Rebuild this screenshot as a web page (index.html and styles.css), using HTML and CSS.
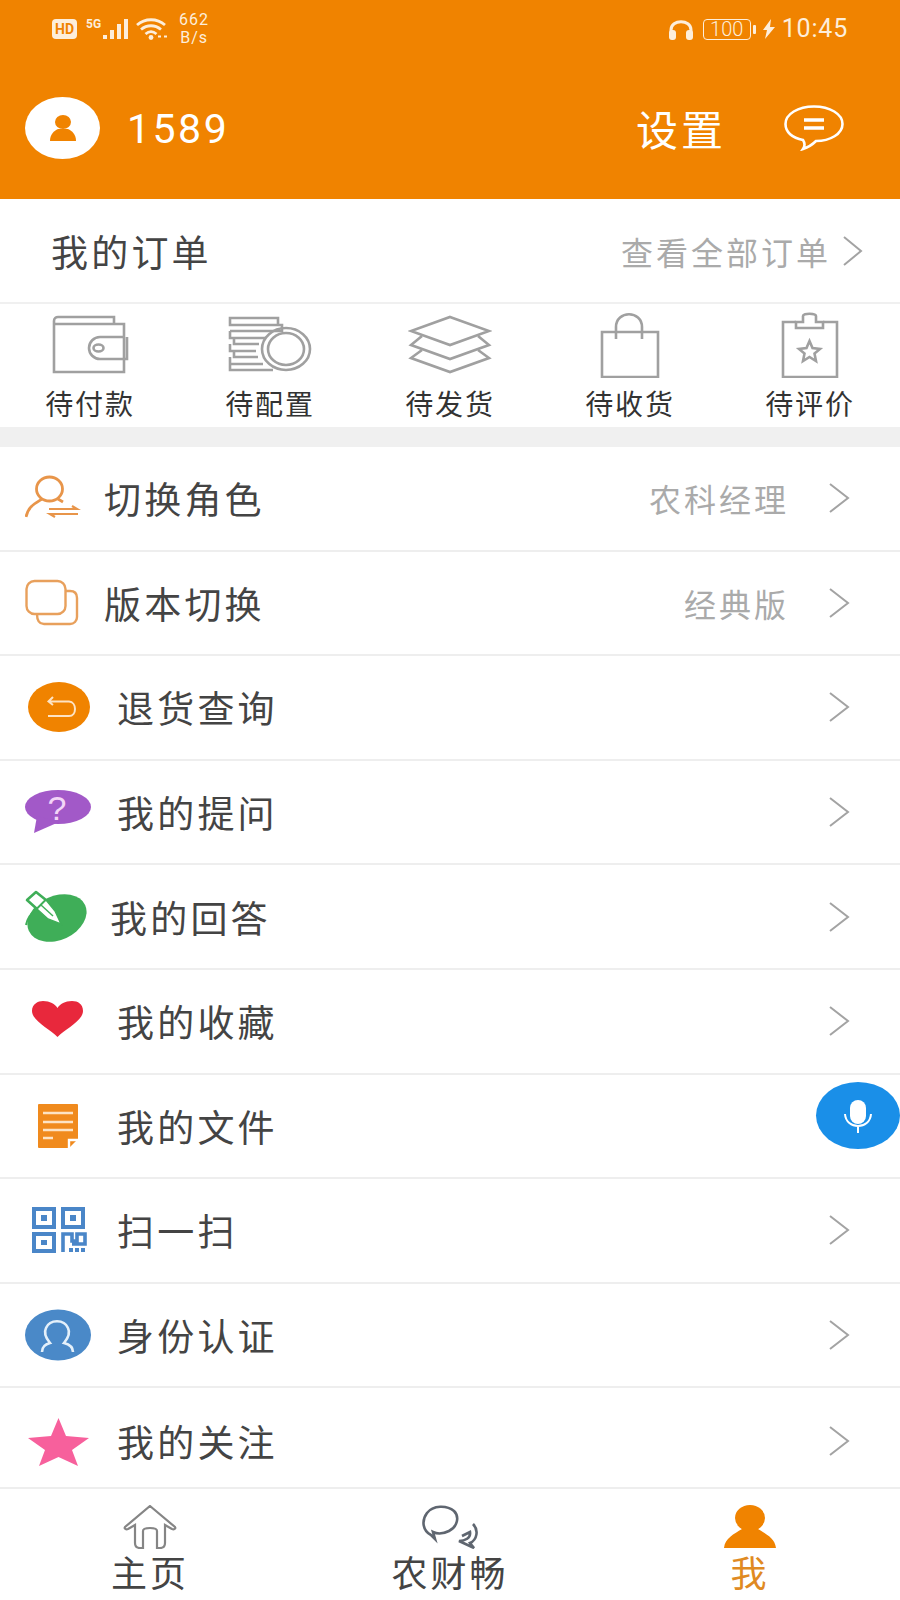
FILE: index.html
```html
<!DOCTYPE html>
<html lang="zh-CN">
<head>
<meta charset="utf-8">
<title>我的</title>
<link rel="stylesheet" href="styles.css">
</head>
<body>
<div class="app">
  <header class="hero">
    <div class="status">
      <div class="status-side">
        <span class="hd">HD</span>
        <span class="net">5G</span>
        <svg class="bars" width="28" height="22" viewBox="0 0 28 22"><path d="M2 17h4v4H2zM9 12h4v9H9zM16 6h4v15h-4zM23 1h4v20h-4z" fill="#fdeedb"/></svg>
        <svg class="wifi" width="33" height="22" viewBox="0 0 33 22" fill="none" stroke="#fdeedb" stroke-width="2.800"><path d="M1 7C9 0 21 0 29 7M5 11.500C11 6.500 19 6.500 25 11.500M9.500 16C13 13 17 13 20.500 16"/><circle cx="15" cy="19.500" r="2.400" fill="#fdeedb" stroke="none"/><path d="M25 18.500l-3 0M28 18.500l3 0" stroke-width="2"/></svg>
        <span class="speed"><span>662</span><span>B/s</span></span>
      </div>
      <div class="status-side">
        <svg class="phones" width="26" height="22" viewBox="0 0 26 22" fill="none"><path d="M3 16V12C3 1 23 1 23 12V16" stroke="#fdeedb" stroke-width="3"/><rect x="1" y="12" width="7" height="10" rx="3" fill="#fdeedb"/><rect x="18" y="12" width="7" height="10" rx="3" fill="#fdeedb"/></svg>
        <span class="battery">100</span>
        <span class="tip"></span>
        <svg class="bolt" width="12" height="20" viewBox="0 0 12 20"><path d="M8 0L0 11h4l-2 9 10-12H7z" fill="#fdeedb"/></svg>
        <span class="time">10:45</span>
      </div>
    </div>
    <div class="profile">
      <div class="avatar">
        <svg width="28" height="28" viewBox="0 0 28 28"><ellipse cx="14" cy="8" rx="8" ry="7" fill="#f08300"/><path d="M1 27C1 20 5 17 9 15H19C23 17 27 20 27 27Z" fill="#f08300"/></svg>
      </div>
      <span class="user">1589</span>
      <span class="settings">设置</span>
      <svg class="msg" width="60" height="46" viewBox="0 0 60 46" fill="none" stroke="#fff" stroke-width="2.600"><path d="M19 35C8 33 1.500 27 1.500 19 1.500 9 14 1.500 30 1.500S58.500 9 58.500 19 46 36 32 36C29 39 25 42 19 44 21 41 21 38 19 35Z"/><path d="M20 15H40M20 23H40" stroke-width="3.400"/></svg>
    </div>
  </header>

  <section class="orders">
    <div class="orders-head">
      <span class="orders-title">我的订单</span>
      <span class="orders-all">查看全部订单</span>
      <svg class="chev" width="22" height="30" viewBox="0 0 22 30" fill="none"><path d="M3 1L20 15 3 29" stroke="#a3a3a3" stroke-width="2"/></svg>
    </div>
    <div class="orders-grid">
      <div class="order">
        <svg width="78" height="62" viewBox="0 0 78 62" fill="none" stroke="#a0a0a0" stroke-width="2.600"><path d="M3 12V60H73V12H3M3 12V9C3 6 5 5 7 5H63V12M73 25H49A11 11 0 0 0 49 47H73M76 25V47H72"/><ellipse cx="47.500" cy="36" rx="5" ry="3.500"/></svg>
        <span>待付款</span>
      </div>
      <div class="order">
        <svg width="84" height="62" viewBox="0 0 84 62" fill="none" stroke="#a0a0a0" stroke-width="2.600"><path d="M2 6H50V13H2ZM6 13H54V19H6M2 19H46M2 19V26H38M6 26V32H31M2 32V39H28M6 39V45H30M2 45V52H35M2 52V58H45"/><ellipse cx="58" cy="37" rx="24" ry="21"/><ellipse cx="58" cy="37" rx="18" ry="16"/></svg>
        <span>待配置</span>
      </div>
      <div class="order">
        <svg width="84" height="62" viewBox="0 0 84 62" fill="none" stroke="#a0a0a0" stroke-width="2.600"><path d="M42 5L81 19 42 33 3 19Z"/><path d="M14 24L3 33 42 47 81 33 70 24"/><path d="M14 38L3 46 42 60 81 46 70 38"/></svg>
        <span>待发货</span>
      </div>
      <div class="order">
        <svg width="60" height="66" viewBox="0 0 60 66" fill="none" stroke="#a0a0a0" stroke-width="2.600"><path d="M2 20H58V65H2Z"/><path d="M16 27V15C16 -2 42 -2 42 15V27"/></svg>
        <span>待收货</span>
      </div>
      <div class="order">
        <svg width="60" height="66" viewBox="0 0 60 66" fill="none" stroke="#a0a0a0" stroke-width="2.600"><path d="M16 10H3V65H57V10H43"/><path d="M16 16V10H23V4C23 1 36 1 36 4V10H43V16Z"/><path d="M29.500 29L32.500 36 40 37 34.500 41.500 36 49 29.500 45 23 49 24.500 41.500 19 37 26.500 36Z"/></svg>
        <span>待评价</span>
      </div>
    </div>
  </section>

  <div class="gap"></div>

  <main class="list">
    <div class="row">
      <div class="lead lead-s">
        <svg width="66" height="60" viewBox="0 0 66 60" fill="none" stroke="#e8954a" stroke-width="2.800"><ellipse cx="24.500" cy="21" rx="13" ry="12"/><path d="M1 49C3 39 9 36 17 31M33 31L38 34"/><path d="M24 41H52L47 38M53 46H25L30 49" stroke-width="2.200"/></svg>
      </div>
      <span class="label">切换角色</span>
      <span class="value">农科经理</span>
      <svg class="chev-row" width="22" height="30" viewBox="0 0 22 30" fill="none"><path d="M2 1L20 15 2 29" stroke="#a3a3a3" stroke-width="2"/></svg>
    </div>
    <div class="row">
      <div class="lead lead-s">
        <svg width="66" height="60" viewBox="0 0 66 60" fill="none" stroke="#e8a05c" stroke-width="2.400"><rect x="1.500" y="8" width="39" height="33" rx="8"/><path d="M41 18H45C49 18 52 20 52 25V44C52 48 49 51 45 51H19C15 51 12 48 12 41"/></svg>
      </div>
      <span class="label">版本切换</span>
      <span class="value">经典版</span>
      <svg class="chev-row" width="22" height="30" viewBox="0 0 22 30" fill="none"><path d="M2 1L20 15 2 29" stroke="#a3a3a3" stroke-width="2"/></svg>
    </div>
    <div class="row">
      <div class="lead lead-l">
        <svg width="66" height="60" viewBox="0 0 66 60" fill="none"><ellipse cx="34" cy="30" rx="31" ry="25" fill="#f08300"/><path d="M28 20L23.500 24.500 28 28M24 24.500H44C52 25 52 39 44 39H23" stroke="#fde3c4" stroke-width="2"/></svg>
      </div>
      <span class="label">退货查询</span>
      <svg class="chev-row" width="22" height="30" viewBox="0 0 22 30" fill="none"><path d="M2 1L20 15 2 29" stroke="#a3a3a3" stroke-width="2"/></svg>
    </div>
    <div class="row">
      <div class="lead lead-l">
        <svg width="66" height="60" viewBox="0 0 66 60"><ellipse cx="33" cy="25" rx="33" ry="17" fill="#a259c8"/><path d="M12 34L9 51 34 40Z" fill="#a259c8"/><text class="qmark" x="32" y="38">?</text></svg>
      </div>
      <span class="label">我的提问</span>
      <svg class="chev-row" width="22" height="30" viewBox="0 0 22 30" fill="none"><path d="M2 1L20 15 2 29" stroke="#a3a3a3" stroke-width="2"/></svg>
    </div>
    <div class="row">
      <div class="lead lead-m">
        <svg width="66" height="60" viewBox="0 0 66 60"><ellipse cx="32" cy="31" rx="31" ry="22" transform="rotate(-25 32 31)" fill="#3fae58"/><path d="M1 38Q3 28 12 22" fill="none" stroke="#3fae58" stroke-width="2"/><path d="M2 13L11 5 21 13 12 22Z" fill="#fff" stroke="#3fae58" stroke-width="2.600" stroke-linejoin="round"/><path d="M12 22L21 13 30 24 36 37 23 32Z" fill="#fff" stroke="#3fae58" stroke-width="1.400"/><path d="M16 18L28 29" stroke="#3fae58" stroke-width="1.400"/></svg>
      </div>
      <span class="label">我的回答</span>
      <svg class="chev-row" width="22" height="30" viewBox="0 0 22 30" fill="none"><path d="M2 1L20 15 2 29" stroke="#a3a3a3" stroke-width="2"/></svg>
    </div>
    <div class="row">
      <div class="lead lead-l">
        <svg width="66" height="60" viewBox="0 0 66 60"><path d="M32.500 46C25 38 7 30 7 20 7 13 13 10 18 10 25 10 30 13 32.500 17 35 13 40 10 47 10 53 10 58 13 58 20 58 30 40 38 32.500 46Z" fill="#e8283c"/></svg>
      </div>
      <span class="label">我的收藏</span>
      <svg class="chev-row" width="22" height="30" viewBox="0 0 22 30" fill="none"><path d="M2 1L20 15 2 29" stroke="#a3a3a3" stroke-width="2"/></svg>
    </div>
    <div class="row">
      <div class="lead lead-l">
        <svg width="66" height="60" viewBox="0 0 66 60"><path d="M14 8H52A1 1 0 0 1 53 9V43L44 52H14A1 1 0 0 1 13 51V9A1 1 0 0 1 14 8Z" fill="#f08a1d"/><path d="M18 17H48M18 26H48M18 34H48M18 42H28" stroke="#fde3c4" stroke-width="2.400" fill="none"/><path d="M44 52V44H53" stroke="#fff" stroke-width="2.400" fill="none"/></svg>
      </div>
      <span class="label">我的文件</span>
    </div>
    <div class="row">
      <div class="lead lead-l">
        <svg width="66" height="60" viewBox="0 0 66 60" fill="none" stroke="#4a86c8" stroke-width="4"><rect x="9" y="9" width="20" height="18"/><rect x="38" y="9" width="20" height="18"/><rect x="9" y="34" width="20" height="17"/><path d="M16 15h6v6h-6zM45 15h6v6h-6zM16 40h6v5h-6z" fill="#4a86c8" stroke="none"/><path d="M38 52V34H47V41H52V34H60V44H47" stroke-width="3.600"/><path d="M44 48h4v4h-4zM50 48h4v4h-4zM56 48h4v4h-4z" fill="#4a86c8" stroke="none"/></svg>
      </div>
      <span class="label">扫一扫</span>
      <svg class="chev-row" width="22" height="30" viewBox="0 0 22 30" fill="none"><path d="M2 1L20 15 2 29" stroke="#a3a3a3" stroke-width="2"/></svg>
    </div>
    <div class="row">
      <div class="lead lead-l">
        <svg width="66" height="60" viewBox="0 0 66 60" fill="none"><ellipse cx="33" cy="30" rx="33" ry="25.500" fill="#4a89c8"/><path d="M17 47C17 41 21 39 25 38 20 32 19 27 21 23 25 14 39 14 43 23 45 27 44 32 39 38 43 39 48 41 48 47" stroke="#e4f0fa" stroke-width="2.600"/></svg>
      </div>
      <span class="label">身份认证</span>
      <svg class="chev-row" width="22" height="30" viewBox="0 0 22 30" fill="none"><path d="M2 1L20 15 2 29" stroke="#a3a3a3" stroke-width="2"/></svg>
    </div>
    <div class="row">
      <div class="lead lead-l">
        <svg width="66" height="60" viewBox="0 0 66 60"><path d="M33.500 7L41 25 64 27 47 39 53 55 33.500 46 14 55 20 39 3 27 26 25Z" fill="#f7609c"/></svg>
      </div>
      <span class="label">我的关注</span>
      <svg class="chev-row" width="22" height="30" viewBox="0 0 22 30" fill="none"><path d="M2 1L20 15 2 29" stroke="#a3a3a3" stroke-width="2"/></svg>
    </div>
  </main>

  <nav class="tabs">
    <div class="tab">
      <svg width="54" height="44" viewBox="0 0 54 44" fill="none" stroke="#858585" stroke-width="2.200"><path d="M27 1L52 22C53 23.500 51 25 49 24L42 20V38C42 41 40 43 37 43H34V26C34 22 20 22 20 26V43H17C14 43 12 41 12 38V20L5 24C3 25 1 23.500 2 22Z"/></svg>
      <span>主页</span>
    </div>
    <div class="tab">
      <svg width="58" height="44" viewBox="0 0 58 44" fill="none" stroke="#5f6670" stroke-width="2.600"><path d="M10 30C2 26 0 16 6 8 12 0 26 0 33 6 39 12 36 22 28 26 22 29 16 29 12 27L14 34Z"/><path d="M52 19C58 25 56 35 49 38L53 43 38 36C44 36 50 33 49 27L41 31"/></svg>
      <span>农财畅</span>
    </div>
    <div class="tab tab-on">
      <svg width="54" height="44" viewBox="0 0 54 44"><ellipse cx="27" cy="13" rx="15" ry="13" fill="#f08300"/><path d="M1 43C2 33 11 29 19 24H35C43 29 52 33 53 43Z" fill="#f08300"/></svg>
      <span>我</span>
    </div>
  </nav>

  <button class="mic" type="button" aria-label="语音">
    <svg width="28" height="34" viewBox="0 0 28 34" fill="none"><rect x="6" y="1" width="16" height="24" rx="8" fill="#fff"/><path d="M1 15C2 31 26 31 27 15M14 28V34" stroke="#fff" stroke-width="2"/></svg>
  </button>
</div>
</body>
</html>
```
FILE: styles.css
```css
* { box-sizing: border-box; }
html, body { margin: 0; padding: 0; }
body {
  background: #fff;
  font-family: "Noto Sans CJK SC", "Noto Sans", sans-serif;
}
svg { display: block; }

.app {
  position: relative;
  width: 900px;
  height: 1600px;
  display: flex;
  flex-direction: column;
  overflow: hidden;
  background: #fff;
}

/* header */
.hero {
  height: 199px;
  flex: none;
  background: #f08300;
  color: #fff;
  display: flex;
  flex-direction: column;
}
.status {
  height: 58px;
  flex: none;
  padding: 0 52px;
  display: flex;
  justify-content: space-between;
  align-items: center;
  color: #fdeedb;
  font-family: Roboto, sans-serif;
}
.status-side { display: flex; align-items: center; }
.hd {
  width: 25px;
  height: 20px;
  border-radius: 4px;
  background: #fdeedb;
  color: #f08300;
  font-size: 14px;
  font-weight: 700;
  line-height: 20px;
  text-align: center;
}
.net {
  margin: 0 0 10px 9px;
  font-size: 12px;
  font-weight: 700;
  line-height: 12px;
}
.bars { margin-left: 0; }
.wifi { margin-left: 7px; }
.speed {
  margin-left: 10px;
  display: flex;
  flex-direction: column;
  align-items: center;
  font-size: 16px;
  line-height: 18px;
  letter-spacing: 1px;
}
.battery {
  width: 48px;
  height: 21px;
  margin-left: 9px;
  border: 1.500px solid #fdeedb;
  border-radius: 4px;
  font-size: 20px;
  font-weight: 300;
  line-height: 18px;
  text-align: center;
}
.tip {
  width: 3px;
  height: 9px;
  margin-left: 2px;
  border-radius: 1px;
  background: #fdeedb;
}
.bolt { margin-left: 7px; }
.time {
  margin-left: 7px;
  font-size: 25px;
  line-height: 30px;
  letter-spacing: 0.8px;
}
.profile {
  flex: 1;
  padding: 0 0 2px 25px;
  display: flex;
  align-items: center;
}
.avatar {
  width: 75px;
  height: 62px;
  border-radius: 50%;
  background: #fff;
  display: flex;
  align-items: center;
  justify-content: center;
}
.user {
  margin: 3px 0 0 27px;
  font-family: Roboto, sans-serif;
  font-size: 41px;
  letter-spacing: 2.500px;
}
.settings {
  margin-left: auto;
  font-size: 42px;
  line-height: 50px;
  letter-spacing: 3px;
}
.msg { margin: 0 56px 0 58px; }

/* orders */
.orders { flex: none; }
.orders-head {
  height: 105px;
  padding: 0 37px 0 51px;
  border-bottom: 2px solid #f0f0f0;
  display: flex;
  align-items: center;
}
.orders-title {
  font-size: 37px;
  letter-spacing: 3.200px;
  color: #444;
}
.orders-all {
  margin-left: auto;
  font-size: 32px;
  letter-spacing: 3px;
  color: #aaa;
}
.chev { margin-left: 10px; }
.orders-grid {
  height: 123px;
  display: grid;
  grid-template-columns: repeat(5, 1fr);
}
.order {
  padding-top: 8px;
  padding-bottom: 5px;
  display: flex;
  flex-direction: column;
  align-items: center;
  justify-content: space-between;
  color: #333;
  font-size: 28px;
  letter-spacing: 1.800px;
  line-height: 38px;
}
.gap {
  height: 20px;
  flex: none;
  background: #f0f0f0;
}

/* list */
.list {
  flex: 1;
  min-height: 0;
  overflow: hidden;
}
.row {
  height: 104.600px;
  padding-right: 50px;
  border-bottom: 2px solid #eee;
  display: flex;
  align-items: center;
}
.row:last-child { border-bottom: 0; }
.lead { flex: none; padding-left: 25px; }
.lead-s { width: 104px; }
.lead-m { width: 110px; }
.lead-l { width: 117px; }
.label {
  font-size: 37px;
  letter-spacing: 3.200px;
  color: #444;
}
.value {
  margin-left: auto;
  font-size: 32px;
  letter-spacing: 3px;
  color: #aaa;
}
.chev-row { margin-left: auto; }
.value + .chev-row { margin-left: 39px; }
.qmark {
  font-family: "Liberation Sans", sans-serif;
  font-size: 34px;
  fill: #f3d5f7;
  text-anchor: middle;
}

/* tabs */
.tabs {
  height: 113px;
  flex: none;
  border-top: 2px solid #eee;
  background: #fff;
  display: grid;
  grid-template-columns: repeat(3, 300px);
}
.tab {
  padding-top: 16px;
  display: flex;
  flex-direction: column;
  align-items: center;
  color: #444;
  font-size: 36px;
  line-height: 44px;
  letter-spacing: 3px;
}
.tab-on { color: #e08a22; }

/* floating voice button */
.mic {
  position: absolute;
  top: 1082px;
  right: 0;
  width: 84px;
  height: 67px;
  padding: 0;
  border: 0;
  border-radius: 50%;
  background: #1a8fe8;
  display: flex;
  align-items: center;
  justify-content: center;
}
```
